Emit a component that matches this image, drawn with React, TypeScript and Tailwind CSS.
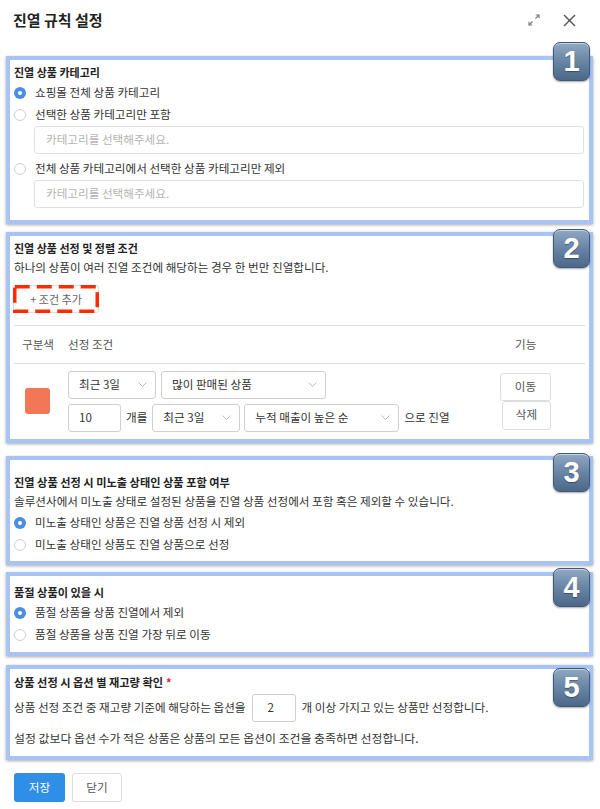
import React from 'react';

const Badge = ({ n, pos }: { n: string; pos: string }) => (
  <div
    className={`absolute right-[-1px] ${pos} w-[37px] h-[39px] rounded-[7px] border border-[#3f5877] bg-linear-to-b from-[#8fa8c3] via-[#6985a5] to-[#4b688a] shadow-[inset_0_1px_0_rgba(255,255,255,0.5),0_1px_2px_rgba(0,0,0,0.35)] flex items-center justify-center`}
  >
    <span className="font-['Liberation_Sans',Arial,sans-serif] font-bold text-[29px] leading-none text-white [text-shadow:0_1px_1px_rgba(0,0,0,0.35)]">
      {n}
    </span>
  </div>
);

const Radio = ({ checked, label }: { checked?: boolean; label: string }) => (
  <div className="flex items-center h-[22px]">
    {checked ? (
      <span className="w-[12px] h-[12px] rounded-full bg-[#4a8ee4] flex items-center justify-center">
        <span className="w-[4px] h-[4px] rounded-full bg-white" />
      </span>
    ) : (
      <span className="w-[12px] h-[12px] rounded-full border border-[#cfcfcf] bg-white" />
    )}
    <span className="ml-[9px]">{label}</span>
  </div>
);

const Chevron = () => (
  <svg width="9" height="5" viewBox="0 0 9 5">
    <polyline points="0.5,0.5 4.5,4.5 8.5,0.5" fill="none" stroke="#b8b8b8" strokeWidth="1" />
  </svg>
);

const Select = ({ label, w }: { label: string; w: string }) => (
  <div className={`${w} h-[28px] border border-[#cfcfcf] rounded-[3px] bg-white flex items-center justify-between pl-[10px] pr-[8px]`}>
    <span>{label}</span>
    <Chevron />
  </div>
);

const Section = ({ h, mt, badge, badgePos, children }: { h: string; mt: string; badge: string; badgePos: string; children: React.ReactNode }) => (
  <div className={`relative ${mt} ml-[6px] w-[587px] ${h} border-4 border-[#a7c4f4] bg-white shadow-[0_1px_3px_rgba(0,0,0,0.35)] pl-[4px]`}>
    {children}
    <Badge n={badge} pos={badgePos} />
  </div>
);

export default function App() {
  return (
    <div className="w-[600px] h-[809px] bg-white overflow-hidden text-[#333] text-[11.6px] font-['Noto_Sans_CJK_KR','Noto_Sans',sans-serif]">
      {/* header */}
      <div className="h-[40px] flex items-center pl-[13px] pr-[24px]">
        <h1 className="text-[15px] font-bold text-[#222]">진열 규칙 설정</h1>
        <div className="ml-auto flex items-center gap-[22px]">
          <svg width="14" height="14" viewBox="0 0 14 14">
            <g fill="none" stroke="#7a7a7a" strokeWidth="1.1">
              <line x1="8.5" y1="5.5" x2="12" y2="2" />
              <polyline points="8.8,2 12,2 12,5.2" />
              <line x1="5.5" y1="8.5" x2="2" y2="12" />
              <polyline points="2,8.8 2,12 5.2,12" />
            </g>
          </svg>
          <svg width="13" height="13" viewBox="0 0 13 13">
            <g stroke="#555" strokeWidth="1.4">
              <line x1="1" y1="1" x2="12" y2="12" />
              <line x1="12" y1="1" x2="1" y2="12" />
            </g>
          </svg>
        </div>
      </div>

      {/* 1 */}
      <Section h="h-[168px]" mt="mt-[16px]" badge="1" badgePos="top-[-18px]">
        <div className="pt-[2px] h-[22px] flex items-center font-bold text-[11px] text-[#222]">진열 상품 카테고리</div>
        <Radio checked label="쇼핑몰 전체 상품 카테고리" />
        <Radio label="선택한 상품 카테고리만 포함" />
        <div className="ml-[20px] w-[550px] h-[28px] border border-[#e0e0e0] rounded-[3px] flex items-center pl-[11px] text-[#b3b3b3]">
          카테고리를 선택해주세요.
        </div>
        <div className="mt-[4px]">
          <Radio label="전체 상품 카테고리에서 선택한 상품 카테고리만 제외" />
        </div>
        <div className="ml-[20px] w-[550px] h-[28px] border border-[#e0e0e0] rounded-[3px] flex items-center pl-[11px] text-[#b3b3b3]">
          카테고리를 선택해주세요.
        </div>
      </Section>

      {/* 2 */}
      <Section h="h-[211px]" mt="mt-[8px]" badge="2" badgePos="top-[-7px]">
        <div className="pt-[2px] h-[22px] flex items-center font-bold text-[11px] text-[#222]">진열 상품 선정 및 정렬 조건</div>
        <div className="h-[20px] flex items-center text-[11.6px]">하나의 상품이 여러 진열 조건에 해당하는 경우 한 번만 진열합니다.</div>
        <div className="relative mt-[7px] ml-[-1px] w-[86px] h-[28px] border border-[#ddd] rounded-[3px] flex items-center justify-center text-[#666] text-[11px]">
          + 조건 추가
          <svg className="absolute left-[-1px] top-[-1px]" width="86" height="28" viewBox="0 0 86 28">
            <rect x="1.75" y="1.75" width="82.5" height="24.5" fill="none" stroke="#ff2a00" strokeWidth="3.5" strokeDasharray="15 7" />
          </svg>
        </div>
        <div className="mt-[12px] mr-[4px] border-t border-[#ddd]">
          <div className="h-[38px] flex items-center border-b border-[#ddd] text-[#555]">
            <span className="w-[54px] pl-[8px]">구분색</span>
            <span className="flex-1">선정 조건</span>
            <span className="w-[85px] pl-[15px]">기능</span>
          </div>
          <div className="h-[74px] flex items-center">
            <div className="w-[54px] pl-[11px]">
              <div className="w-[25px] h-[26px] rounded-[3px] bg-[#f27756]" />
            </div>
            <div className="flex-1 flex flex-col gap-[5px]">
              <div className="flex gap-[5px]">
                <Select label="최근 3일" w="w-[88px]" />
                <Select label="많이 판매된 상품" w="w-[165px]" />
              </div>
              <div className="flex items-center">
                <div className="w-[53px] h-[28px] border border-[#cfcfcf] rounded-[3px] flex items-center pl-[10px]">10</div>
                <span className="ml-[5px]">개를</span>
                <div className="ml-[5px]">
                  <Select label="최근 3일" w="w-[88px]" />
                </div>
                <div className="ml-[4px]">
                  <Select label="누적 매출이 높은 순" w="w-[155px]" />
                </div>
                <span className="ml-[5px]">으로 진열</span>
              </div>
            </div>
            <div className="w-[85px] flex flex-col items-start">
              <div className="w-[51px] h-[28px] border border-[#ddd] rounded-[3px] flex items-center justify-center text-[#555]">이동</div>
              <div className="ml-[2px] w-[49px] h-[29px] border border-[#ddd] rounded-[3px] flex items-center justify-center text-[#555]">삭제</div>
            </div>
          </div>
        </div>
      </Section>

      {/* 3 */}
      <Section h="h-[109px]" mt="mt-[13px]" badge="3" badgePos="top-[-7px]">
        <div className="pt-[12px] h-[32px] flex items-center font-bold text-[11.2px] text-[#222]">진열 상품 선정 시 미노출 상태인 상품 포함 여부</div>
        <div className="h-[20px] flex items-center">솔루션사에서 미노출 상태로 설정된 상품을 진열 상품 선정에서 포함 혹은 제외할 수 있습니다.</div>
        <Radio checked label="미노출 상태인 상품은 진열 상품 선정 시 제외" />
        <Radio label="미노출 상태인 상품도 진열 상품으로 선정" />
      </Section>

      {/* 4 */}
      <Section h="h-[84px]" mt="mt-[7px]" badge="4" badgePos="top-[-8px]">
        <div className="pt-[6px] h-[26px] flex items-center font-bold text-[11.2px] text-[#222]">품절 상품이 있을 시</div>
        <Radio checked label="품절 상품을 상품 진열에서 제외" />
        <Radio label="품절 상품을 상품 진열 가장 뒤로 이동" />
      </Section>

      {/* 5 */}
      <Section h="h-[95px]" mt="mt-[9px]" badge="5" badgePos="top-[-1px]">
        <div className="pt-[3px] h-[23px] flex items-center font-bold text-[11.2px] text-[#222]">
          상품 선정 시 옵션 별 재고량 확인<span className="ml-[3px] text-[#e02424]">*</span>
        </div>
        <div className="mt-[2px] h-[28px] flex items-center">
          <span>상품 선정 조건 중 재고량 기준에 해당하는 옵션을</span>
          <div className="ml-[6px] w-[44px] h-[28px] border border-[#cfcfcf] rounded-[3px] flex items-center pl-[15px]">2</div>
          <span className="ml-[6px]">개 이상 가지고 있는 상품만 선정합니다.</span>
        </div>
        <div className="mt-[6px] h-[20px] flex items-center text-[11.9px]">설정 값보다 옵션 수가 적은 상품은 상품의 모든 옵션이 조건을 충족하면 선정합니다.</div>
      </Section>

      {/* footer */}
      <div className="mt-[13px] pl-[14px] flex gap-[7px]">
        <div className="w-[51px] h-[29px] rounded-[3px] bg-[#2f8ee6] text-white flex items-center justify-center">저장</div>
        <div className="w-[50px] h-[29px] rounded-[3px] border border-[#ddd] text-[#555] flex items-center justify-center">닫기</div>
      </div>
    </div>
  );
}
